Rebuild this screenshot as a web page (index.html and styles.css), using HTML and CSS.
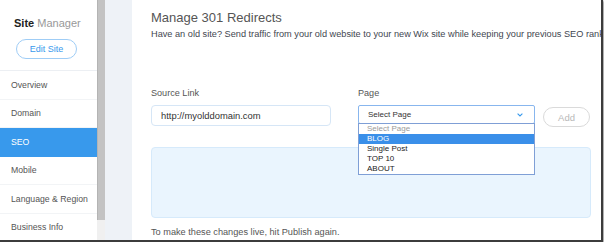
FILE: index.html
```html
<!DOCTYPE html>
<html lang="en">
<head>
<meta charset="utf-8">
<title>Site Manager - SEO</title>
<link rel="stylesheet" href="styles.css">
</head>
<body>
<div class="frame">
  <aside class="sidebar">
    <div class="side-head">
      <div class="brand"><b>Site</b> <span>Manager</span></div>
      <div class="edit-btn">Edit Site</div>
    </div>
    <nav class="nav">
      <div class="nav-item">Overview</div>
      <div class="nav-item">Domain</div>
      <div class="nav-item active">SEO</div>
      <div class="nav-item">Mobile</div>
      <div class="nav-item">Language &amp; Region</div>
      <div class="nav-item">Business Info</div>
    </nav>
  </aside>
  <div class="scrollbar"><div class="thumb"></div><div class="track"></div></div>
  <div class="strip"></div>
  <main class="main">
    <h1 class="title">Manage 301 Redirects</h1>
    <p class="sub">Have an old site? Send traffic from your old website to your new Wix site while keeping your previous SEO rankings.</p>
    <div class="form">
      <div class="field source">
        <div class="label">Source Link</div>
        <div class="input">http://myolddomain.com</div>
      </div>
      <div class="field page">
        <div class="label">Page</div>
        <div class="row">
          <div class="select-wrap">
            <div class="select">
              <span>Select Page</span>
              <svg class="chev" width="6" height="4" viewBox="0 0 6 4"><path d="M0.6 0.6 L3 3 L5.4 0.6" fill="none" stroke="#3899ec" stroke-width="1.1"/></svg>
            </div>
            <ul class="options">
              <li class="placeholder">Select Page</li>
              <li class="hl">BLOG</li>
              <li>Single Post</li>
              <li>TOP 10</li>
              <li>ABOUT</li>
            </ul>
          </div>
          <div class="add">Add</div>
        </div>
      </div>
    </div>
    <div class="panel"></div>
    <p class="foot">To make these changes live, hit Publish again.</p>
  </main>
</div>
</body>
</html>
```
FILE: styles.css
```css
html, body {
  margin: 0;
  padding: 0;
  background: #ffffff;
}
body {
  font-family: "Liberation Sans", Arial, sans-serif;
  color: #555;
}
.frame {
  width: 601px;
  height: 240px;
  display: flex;
  overflow: hidden;
  border-right: 2px solid #3c3c3c;
  border-bottom: 2px solid #3c3c3c;
  box-shadow: 1px 1px 2px rgba(0, 0, 0, 0.45);
  background: #fff;
}
.sidebar {
  width: 97px;
  flex: none;
  background: #fff;
  display: flex;
  flex-direction: column;
}
.side-head {
  flex: none;
  border-bottom: 1px solid #eceff3;
  padding-top: 17px;
  height: 53px;
}
.brand {
  font-size: 11px;
  line-height: 13px;
  padding-left: 14px;
  color: #222;
  white-space: nowrap;
}
.brand b {
  font-weight: bold;
  color: #222;
}
.brand span {
  color: #999;
}
.edit-btn {
  margin: 9px 0 0 16px;
  width: 61px;
  height: 20px;
  box-sizing: border-box;
  border: 1px solid #9fcdf6;
  border-radius: 10px;
  color: #3899ec;
  font-size: 9px;
  display: flex;
  align-items: center;
  justify-content: center;
}
.nav {
  flex: none;
}
.nav-item {
  height: 28.5px;
  box-sizing: border-box;
  border-bottom: 1px solid #f2f4f6;
  padding-left: 11px;
  font-size: 8.7px;
  color: #555;
  display: flex;
  align-items: center;
  white-space: nowrap;
}
.nav-item.active {
  background: #3899ec;
  color: #fff;
  border-bottom-color: #3899ec;
}
.scrollbar {
  width: 8px;
  flex: none;
  display: flex;
  flex-direction: column;
}
.thumb {
  height: 220px;
  flex: none;
  background: #c3c3c3;
  border-left: 1px solid #b4b4b4;
}
.track {
  flex: 1;
  background: #f0f0f0;
}
.strip {
  width: 27px;
  flex: none;
  background: #eef2f7;
}
.main {
  flex: 1;
  min-width: 0;
  padding: 10px 0 0 19px;
  white-space: nowrap;
}
.title {
  margin: 0;
  font-size: 13px;
  line-height: 16px;
  font-weight: normal;
  color: #555;
}
.sub {
  margin: 3px 0 0;
  font-size: 9.2px;
  line-height: 11px;
  color: #3f4650;
}
.form {
  margin-top: 48px;
  display: flex;
  gap: 27px;
}
.label {
  font-size: 9.1px;
  line-height: 11px;
  color: #555;
  margin-bottom: 6px;
}
.source {
  width: 180px;
}
.input {
  height: 21px;
  box-sizing: border-box;
  border: 1px solid #d6e6f6;
  border-radius: 4px;
  padding-left: 9px;
  font-size: 9.4px;
  color: #333;
  display: flex;
  align-items: center;
}
.row {
  display: flex;
  align-items: flex-start;
}
.select-wrap {
  position: relative;
  width: 177px;
}
.select {
  height: 19px;
  box-sizing: border-box;
  border: 1px solid #88b6ee;
  border-radius: 2px;
  padding: 0 11px 0 9px;
  font-size: 8px;
  color: #333;
  display: flex;
  align-items: center;
  justify-content: space-between;
  background: #fff;
}
.chev {
  display: block;
}
.options {
  position: absolute;
  top: calc(100% - 1px);
  left: 0;
  width: 100%;
  box-sizing: border-box;
  margin: 0;
  padding: 0;
  list-style: none;
  border: 1px solid #7f9fd6;
  background: #fff;
  z-index: 2;
}
.options li {
  height: 10px;
  line-height: 10px;
  padding-left: 8px;
  font-size: 8px;
  color: #222;
}
.options li.placeholder {
  color: #9a9a9a;
}
.options li.hl {
  background: #3a8fe9;
  color: #fff;
}
.add {
  margin: 2px 0 0 8px;
  width: 47px;
  height: 20px;
  box-sizing: border-box;
  border: 1px solid #dadada;
  border-radius: 10px;
  color: #b8b8b8;
  font-size: 9.5px;
  display: flex;
  align-items: center;
  justify-content: center;
}
.panel {
  margin-top: 20px;
  width: 440px;
  height: 71px;
  box-sizing: border-box;
  background: #eaf5fe;
  border: 1px solid #d6eafb;
  border-radius: 4px;
}
.foot {
  margin: 9px 0 0;
  font-size: 9.2px;
  line-height: 11px;
  color: #555;
}
```
